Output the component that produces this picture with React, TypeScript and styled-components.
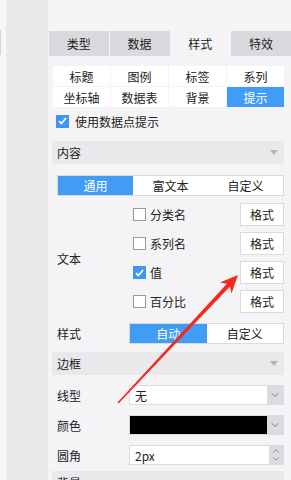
import React, { useState } from 'react';
import styled, { createGlobalStyle } from 'styled-components';
import { ChevronDown, ChevronUp } from 'lucide-react';

const GlobalStyle = createGlobalStyle`
  html, body {
    margin: 0;
    padding: 0;
    background: #f4f4f6;
  }
  body {
    font-family: "Noto Sans CJK SC", "Liberation Sans", sans-serif;
    font-size: 12px;
    color: #222;
  }
`;

const Root = styled.div`
  position: relative;
  display: flex;
  width: 291px;
  height: 480px;
  overflow: hidden;
`;

const LeftEdge = styled.div`
  position: relative;
  width: 6px;
  background: #f6f6f8;
  border-right: 1px solid #eeede1;

  &::before {
    content: '';
    position: absolute;
    left: 0;
    top: 30px;
    width: 1px;
    height: 25px;
    background: #d4d4d8;
  }
`;

const SideColumn = styled.div`
  width: 41px;
  background: #e8e8e8;
`;

const Panel = styled.div`
  flex: 1;
  background: #f4f4f6;
  padding-top: 31px;
`;

const Tabs = styled.div`
  display: grid;
  grid-template-columns: repeat(4, 1fr);
  gap: 1px;
  margin-left: 1px;
  height: 25px;
`;

const Tab = styled.div<{ $active?: boolean }>`
  display: flex;
  align-items: center;
  justify-content: center;
  background: ${({ $active }) => ($active ? '#f4f4f6' : '#d9dadd')};
  font-size: 12px;
`;

const Body = styled.div`
  padding: 0 7px 0 4px;
`;

const SubGrid = styled.div`
  display: grid;
  grid-template-columns: repeat(4, 1fr);
  grid-auto-rows: 20px;
  gap: 1px;
  margin: 10px 0 0 1px;
`;

const SubItem = styled.div<{ $active?: boolean }>`
  display: flex;
  align-items: center;
  justify-content: center;
  background: ${({ $active }) => ($active ? '#409cf5' : '#fff')};
  color: ${({ $active }) => ($active ? '#fff' : '#222')};
`;

const CheckRow = styled.label`
  display: flex;
  align-items: center;
  gap: 6px;
  height: 16px;
  margin: 6px 0 0 4px;
`;

const Box = styled.span<{ $checked?: boolean }>`
  display: inline-flex;
  align-items: center;
  justify-content: center;
  flex: none;
  width: 13px;
  height: 13px;
  box-sizing: border-box;
  background: ${({ $checked }) => ($checked ? '#3d97f0' : '#fff')};
  border: 1px solid ${({ $checked }) => ($checked ? '#3d97f0' : '#9a9a9a')};
`;

const SectionHeader = styled.div<{ $gap: number }>`
  display: flex;
  align-items: center;
  justify-content: space-between;
  height: 23px;
  margin-top: ${({ $gap }) => $gap}px;
  padding: 0 6px 0 5px;
  background: #e9e9eb;
`;

const Triangle = styled.span`
  width: 0;
  height: 0;
  border-left: 4px solid transparent;
  border-right: 4px solid transparent;
  border-top: 5px solid #b4b4b8;
`;

const Segmented = styled.div<{ $ml?: number; $mt?: number }>`
  display: grid;
  grid-template-columns: repeat(3, 1fr);
  height: 21px;
  box-sizing: border-box;
  border: 1px solid #d9d9de;
  background: #fff;
  margin: ${({ $mt = 0 }) => $mt}px 0 0 ${({ $ml = 0 }) => $ml}px;
`;

const Segmented2 = styled(Segmented)`
  grid-template-columns: 1fr 1fr;
`;

const Seg = styled.div<{ $active?: boolean }>`
  display: flex;
  align-items: center;
  justify-content: center;
  background: ${({ $active }) => ($active ? '#409cf5' : '#fff')};
  color: ${({ $active }) => ($active ? '#fff' : '#222')};
`;

const FieldRow = styled.div<{ $mt: number }>`
  display: grid;
  grid-template-columns: 72px 1fr;
  align-items: center;
  margin: ${({ $mt }) => $mt}px 0 0 5px;
`;

const FieldLabel = styled.div`
  padding-left: 0;
`;

const OptionList = styled.div`
  display: flex;
  flex-direction: column;
  gap: 6px;
`;

const OptionRow = styled.div`
  display: flex;
  align-items: center;
  justify-content: space-between;
  height: 23px;
  padding-left: 4px;
`;

const OptionLabel = styled.span`
  display: flex;
  align-items: center;
  gap: 4px;
`;

const FormatButton = styled.button`
  width: 44px;
  height: 23px;
  box-sizing: border-box;
  background: #fff;
  border: 1px solid #d9d9de;
  font: inherit;
  color: #222;
  padding: 0;
`;

const Select = styled.div`
  display: flex;
  height: 20px;
  box-sizing: border-box;
  border: 1px solid #dcdce0;
  background: #fff;
`;

const SelectValue = styled.div<{ $swatch?: string }>`
  flex: 1;
  display: flex;
  align-items: center;
  padding-left: 5px;
  background: ${({ $swatch }) => $swatch || '#fff'};
`;

const SelectButton = styled.div`
  width: 16px;
  display: flex;
  align-items: center;
  justify-content: center;
  background: #dcdce0;
  color: #555;
`;

const Spinner = styled.div`
  width: 14px;
  display: flex;
  flex-direction: column;
  align-items: center;
  justify-content: center;
  background: #dcdce0;
  color: #555;
`;

const Arrow = styled.svg`
  position: absolute;
  left: 0;
  top: 0;
  pointer-events: none;
`;

const Check = () => (
  <svg width="9" height="8" viewBox="0 0 9 8">
    <path d="M1 4.2 L3.4 6.5 L8 1" fill="none" stroke="#fff" strokeWidth="1.8" />
  </svg>
);

const tabs = ['类型', '数据', '样式', '特效'];
const subs = ['标题', '图例', '标签', '系列', '坐标轴', '数据表', '背景', '提示'];
const options = [
  { label: '分类名', checked: false },
  { label: '系列名', checked: false },
  { label: '值', checked: true },
  { label: '百分比', checked: false },
];

export default function App() {
  const [tab] = useState('样式');
  const [sub] = useState('提示');

  return (
    <Root>
      <GlobalStyle />
      <LeftEdge />
      <SideColumn />
      <Panel>
        <Tabs>
          {tabs.map((t) => (
            <Tab key={t} $active={t === tab}>{t}</Tab>
          ))}
        </Tabs>
        <Body>
          <SubGrid>
            {subs.map((s) => (
              <SubItem key={s} $active={s === sub}>{s}</SubItem>
            ))}
          </SubGrid>

          <CheckRow>
            <Box $checked><Check /></Box>
            使用数据点提示
          </CheckRow>

          <SectionHeader $gap={12}>
            内容
            <Triangle />
          </SectionHeader>

          <Segmented $ml={5} $mt={11}>
            <Seg $active>通用</Seg>
            <Seg>富文本</Seg>
            <Seg>自定义</Seg>
          </Segmented>

          <FieldRow $mt={7}>
            <FieldLabel>文本</FieldLabel>
            <OptionList>
              {options.map((o) => (
                <OptionRow key={o.label}>
                  <OptionLabel>
                    <Box $checked={o.checked}>{o.checked && <Check />}</Box>
                    {o.label}
                  </OptionLabel>
                  <FormatButton>格式</FormatButton>
                </OptionRow>
              ))}
            </OptionList>
          </FieldRow>

          <FieldRow $mt={10}>
            <FieldLabel>样式</FieldLabel>
            <Segmented2>
              <Seg $active>自动</Seg>
              <Seg>自定义</Seg>
            </Segmented2>
          </FieldRow>

          <SectionHeader $gap={8}>
            边框
            <Triangle />
          </SectionHeader>

          <FieldRow $mt={10}>
            <FieldLabel>线型</FieldLabel>
            <Select>
              <SelectValue>无</SelectValue>
              <SelectButton><ChevronDown size={12} strokeWidth={1.5} /></SelectButton>
            </Select>
          </FieldRow>

          <FieldRow $mt={10}>
            <FieldLabel>颜色</FieldLabel>
            <Select>
              <SelectValue $swatch="#000" />
              <SelectButton><ChevronDown size={12} strokeWidth={1.5} /></SelectButton>
            </Select>
          </FieldRow>

          <FieldRow $mt={10}>
            <FieldLabel>圆角</FieldLabel>
            <Select>
              <SelectValue>2px</SelectValue>
              <Spinner>
                <ChevronUp size={10} strokeWidth={1.5} style={{ marginBottom: -2 }} />
                <ChevronDown size={10} strokeWidth={1.5} />
              </Spinner>
            </Select>
          </FieldRow>

          <SectionHeader $gap={6}>
            背景
            <Triangle />
          </SectionHeader>
        </Body>
      </Panel>

      <Arrow width="291" height="480" viewBox="0 0 291 480">
        <polygon
          points="117.4,402.5 226.9,283.8 219.9,282.6 238,275 231.5,293.6 229.9,286.6 118.6,403.5"
          fill="#f7281c"
        />
      </Arrow>
    </Root>
  );
}
